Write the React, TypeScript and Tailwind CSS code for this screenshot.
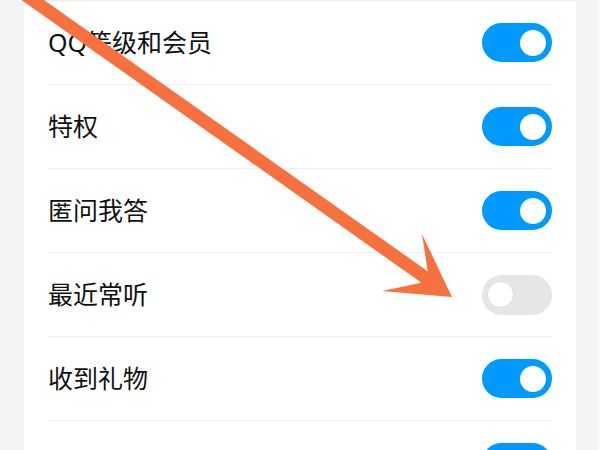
const rows = [
  { label: 'QQ等级和会员', on: true },
  { label: '特权', on: true },
  { label: '匿问我答', on: true },
  { label: '最近常听', on: false },
  { label: '收到礼物', on: true },
  { label: '个性装扮', on: true },
]

function Toggle({ on }: { on: boolean }) {
  if (on) {
    return (
      <div className="flex h-[39px] w-[70px] shrink-0 items-center justify-end rounded-full bg-[#0099ff] pr-[6px]">
        <div className="h-[26px] w-[26px] rounded-full bg-white" />
      </div>
    )
  }
  return (
    <div className="flex h-[40px] w-[70px] shrink-0 items-center justify-start rounded-full bg-[#e6e6e6] pl-[5px]">
      <div className="h-[27px] w-[27px] rounded-full border border-[#dcdcdc] bg-white" />
    </div>
  )
}

export default function App() {
  return (
    <div className="relative flex h-[450px] w-[600px] overflow-hidden bg-[#f4f4f4]">
      <div className="w-[24px] shrink-0" />
      <div className="w-[552px] shrink-0 border-t border-[#eeeeee] bg-white px-6">
        {rows.map(r => (
          <div
            key={r.label}
            className="flex h-[84px] items-center justify-between border-b border-[#efefef]"
          >
            <span
              className="text-[25px] leading-none text-[#111111]"
              style={{ fontFamily: '"Noto Sans", "Noto Sans CJK SC", sans-serif' }}
            >
              {r.label}
            </span>
            <Toggle on={r.on} />
          </div>
        ))}
      </div>
      <div className="w-[22px] shrink-0" />
      <div className="w-[2px] shrink-0 bg-[#fbfbfb]" />

      {/* annotation arrow */}
      <svg className="pointer-events-none absolute left-0 top-0" width="600" height="450" viewBox="0 0 600 450">
        <line x1="20" y1="-9" x2="426" y2="278" stroke="#f7703f" strokeWidth="13" />
        <polygon points="422,234 452,297 382,291 420,283 428,273" fill="#f7703f" />
      </svg>
    </div>
  )
}
